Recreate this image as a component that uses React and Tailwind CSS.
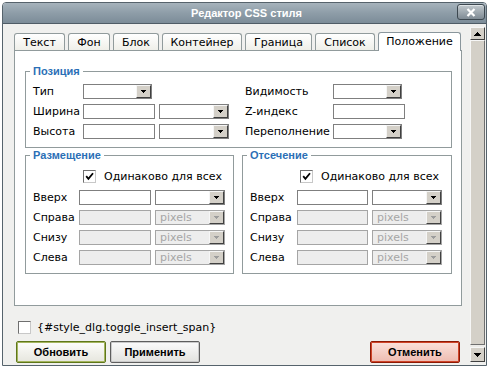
import React from "react";

const TXT = "font-['DejaVu_Sans',Verdana,sans-serif] text-[11px] leading-[13px]";
const BOLD = "font-['Liberation_Sans',Arial,sans-serif] font-bold text-[11px] leading-[13px]";

function Tri({ w = 5, color = "#000", up = false }) {
  const rows = (w + 1) / 2;
  const rects = [];
  for (let i = 0; i < rows; i++) {
    const y = up ? rows - 1 - i : i;
    rects.push(<rect key={i} x={i} y={y} width={w - 2 * i} height={1} fill={color} />);
  }
  return (
    <svg width={w} height={rows} viewBox={`0 0 ${w} ${rows}`} shapeRendering="crispEdges">
      {rects}
    </svg>
  );
}

function Select({ w, disabled, text }) {
  return (
    <div
      className={`${w} h-[15px] flex border ${
        disabled ? "border-[#a5a5a5] bg-[#ededed]" : "border-[#7f7f7f] bg-white"
      }`}
    >
      <div className={`flex-1 pl-[4px] ${TXT} text-[#a6a6a6]`}>{text}</div>
      <div className="w-[15px] h-[13px] flex items-center justify-center bg-[#d4d0c8] border border-t-[#f6f6f6] border-l-[#f6f6f6] border-r-[#404040] border-b-[#404040]">
        <Tri w={5} color={disabled ? "#9c9c9c" : "#000"} />
      </div>
    </div>
  );
}

function Input({ w, disabled }) {
  return (
    <div
      className={`${w} h-[15px] border ${
        disabled ? "border-[#a5a5a5] bg-[#ededed]" : "border-[#7f7f7f] bg-white"
      }`}
    />
  );
}

function Check({ checked }) {
  return (
    <div className="w-[13px] h-[13px] shrink-0 flex items-center justify-center bg-white border border-t-[#6f6f6f] border-l-[#6f6f6f] border-r-[#c8c8c8] border-b-[#c8c8c8]">
      {checked && (
        <svg width="9" height="9" viewBox="0 0 9 9">
          <path d="M1.2 4.2 L3.4 6.8 L8 1.2" stroke="#000" strokeWidth="1.8" fill="none" />
        </svg>
      )}
    </div>
  );
}

function Label({ w, children }) {
  return <div className={`${w} shrink-0 ${TXT} text-black whitespace-nowrap`}>{children}</div>;
}

function Legend({ children }) {
  return <legend className={`${BOLD} text-[#2b6fb6] ml-[4px] px-[3px]`}>{children}</legend>;
}

function SideBox({ title, width, labelW, inputW }) {
  const rows = ["Вверх", "Справа", "Снизу", "Слева"];
  return (
    <fieldset className={`${width} border border-[#919b9c]`}>
      <Legend>{title}</Legend>
      <div className="pl-[7px] pt-[8px] pb-[8px] flex flex-col">
        <div className="flex items-center h-[13px] pl-[50px] gap-[8px]">
          <Check checked />
          <span className={`${TXT} text-black whitespace-nowrap`}>Одинаково для всех</span>
        </div>
        <div className="flex flex-col gap-[5px] mt-[7px]">
          {rows.map((r, i) => (
            <div key={r} className="flex items-center h-[15px]">
              <Label w={labelW}>{r}</Label>
              <Input w={inputW} disabled={i > 0} />
              <div className="ml-[4px]">
                <Select w="w-[70px]" disabled={i > 0} text={i > 0 ? "pixels" : ""} />
              </div>
            </div>
          ))}
        </div>
      </div>
    </fieldset>
  );
}

export default function App() {
  const tabs = [
    ["Текст", "w-[51px]"],
    ["Фон", "w-[42px]"],
    ["Блок", "w-[46px]"],
    ["Контейнер", "w-[80px]"],
    ["Граница", "w-[67px]"],
    ["Список", "w-[60px]"],
  ];
  return (
    <div className="w-[487px] h-[370px] bg-white pl-[2px] pt-[2px] overflow-hidden">
      <div className="w-[485px] h-[364px] flex flex-col border border-[#56636c] rounded-t-[4px] overflow-hidden">
        {/* Title bar */}
        <div className="h-[21px] shrink-0 flex border-b border-[#4f5c66] bg-linear-to-b from-[#a6b3bc] via-[#8e9da8] to-[#7c8c98]">
          <div className={`flex-1 pl-[33px] text-center ${BOLD} text-white leading-[20px]`}>
            Редактор CSS стиля
          </div>
          <div className="w-[28px] h-[16px] mt-[1px] mr-[1px] rounded-[3px] border border-[#3d4850] bg-linear-to-b from-[#c2c9ce] to-[#7f8b94] shadow-[inset_0_1px_0_#e0e5e8] flex items-center justify-center">
            <svg width="10" height="9" viewBox="0 0 10 9">
              <path d="M1.5 1 L8.5 8 M8.5 1 L1.5 8" stroke="#fff" strokeWidth="2.2" />
            </svg>
          </div>
        </div>

        {/* Body */}
        <div className="flex-1 flex bg-[#f0f0ee] pr-[1px]">
          <div className="flex-1 flex flex-col pl-[11px] pt-[8px]">
            {/* Tabs */}
            <div className="flex items-end gap-[3px] h-[18px]">
              {tabs.map(([t, w]) => (
                <div
                  key={t}
                  className={`${w} h-[17px] border border-b-0 border-[#919b9c] rounded-t-[3px] bg-linear-to-b from-white to-[#efefe9] flex items-center justify-center ${TXT} text-black`}
                >
                  {t}
                </div>
              ))}
              <div
                className={`w-[83px] h-[19px] -mb-px relative z-10 border border-b-0 border-[#8a969c] rounded-t-[3px] bg-white flex items-center justify-center pb-[1px] ${TXT} text-black`}
              >
                Положение
              </div>
            </div>

            {/* Panel */}
            <div className="w-[448px] h-[256px] shrink-0 border border-[#919b9c] bg-white flex flex-col pl-[10px] pt-[14px]">
              <fieldset className="w-[427px] border border-[#919b9c]">
                <Legend>Позиция</Legend>
                <div className="pl-[7px] pt-[6px] pb-[8px] flex flex-col gap-[5px]">
                  <div className="flex items-center h-[15px]">
                    <div className="w-[212px] flex items-center">
                      <Label w="w-[50px]">Тип</Label>
                      <Select w="w-[69px]" />
                    </div>
                    <Label w="w-[88px]">Видимость</Label>
                    <Select w="w-[69px]" />
                  </div>
                  <div className="flex items-center h-[15px]">
                    <div className="w-[212px] flex items-center">
                      <Label w="w-[50px]">Ширина</Label>
                      <Input w="w-[72px]" />
                      <div className="ml-[4px]">
                        <Select w="w-[70px]" />
                      </div>
                    </div>
                    <Label w="w-[88px]">Z-индекс</Label>
                    <Input w="w-[72px]" />
                  </div>
                  <div className="flex items-center h-[15px]">
                    <div className="w-[212px] flex items-center">
                      <Label w="w-[50px]">Высота</Label>
                      <Input w="w-[72px]" />
                      <div className="ml-[4px]">
                        <Select w="w-[70px]" />
                      </div>
                    </div>
                    <Label w="w-[88px]">Переполнение</Label>
                    <Select w="w-[69px]" />
                  </div>
                </div>
              </fieldset>

              <div className="flex gap-[8px] mt-[1px]">
                <SideBox title="Размещение" width="w-[209px]" labelW="w-[46px]" inputW="w-[72px]" />
                <SideBox title="Отсечение" width="w-[210px]" labelW="w-[47px]" inputW="w-[71px]" />
              </div>
            </div>

            {/* Insert span checkbox */}
            <div className="flex items-center h-[13px] mt-[15px] pl-[4px] gap-[6px]">
              <Check />
              <span className={`${TXT} text-black`}>{"{#style_dlg.toggle_insert_span}"}</span>
            </div>

            {/* Buttons */}
            <div className="flex mt-[7px] pl-[2px]">
              <div className={`w-[90px] h-[22px] rounded-[2px] border border-[#5f771a] shadow-[inset_0_0_0_1px_#a4b55e] bg-linear-to-b from-[#fdfdfb] to-[#e6e6de] flex items-center justify-center ${BOLD} text-black`}>
                Обновить
              </div>
              <div className={`ml-[4px] w-[90px] h-[22px] rounded-[2px] border border-[#5e5e5e] shadow-[inset_0_0_0_1px_#cacaca] bg-linear-to-b from-[#fbfbfb] to-[#e2e2df] flex items-center justify-center ${BOLD} text-black`}>
                Применить
              </div>
              <div className={`ml-[170px] w-[90px] h-[22px] rounded-[2px] border border-[#8e1a05] shadow-[inset_0_0_0_1px_#d0452a] bg-linear-to-b from-[#fbe2dc] to-[#eebbb0] flex items-center justify-center ${BOLD} text-black`}>
                Отменить
              </div>
            </div>
          </div>

          {/* Scrollbar */}
          <div className="w-[15px] flex flex-col pt-[3px] pb-[3px]">
            <div className="h-[13px] flex items-center justify-center bg-[#d4d0c8] border border-t-[#f6f6f6] border-l-[#f6f6f6] border-r-[#404040] border-b-[#404040]">
              <Tri w={7} up />
            </div>
            <div className="flex-1 bg-[#d4d0c8] border border-t-[#f6f6f6] border-l-[#f6f6f6] border-r-[#6f6f6f] border-b-[#6f6f6f]" />
            <div className="h-[2px] bg-[#ecebe8]" />
            <div className="h-[15px] flex items-center justify-center bg-[#d4d0c8] border border-t-[#f6f6f6] border-l-[#f6f6f6] border-r-[#404040] border-b-[#404040]">
              <Tri w={7} />
            </div>
          </div>
        </div>
      </div>
    </div>
  );
}
